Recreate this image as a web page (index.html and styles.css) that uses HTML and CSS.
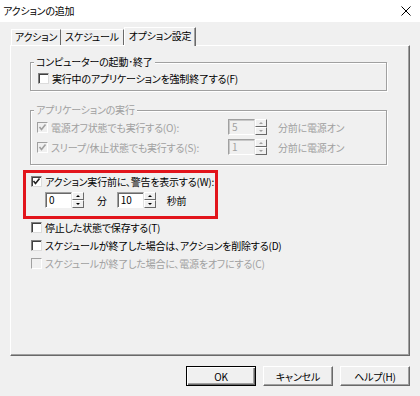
FILE: index.html
```html
<!DOCTYPE html>
<html lang="ja">
<head>
  <meta charset="UTF-8">
  <title>アクションの追加</title>
  <link rel="stylesheet" href="styles.css">
</head>
<body>
  <div class="titlebar">
    <span class="title">アクションの追加</span>
    <svg class="close" width="10" height="10" viewBox="0 0 10 10">
      <path d="M0.5 0.5 L9.5 9.5 M9.5 0.5 L0.5 9.5" stroke="#000" stroke-width="1" fill="none"/>
    </svg>
  </div>

  <div class="dialog">
    <div class="tabs">
      <div class="tab first">アクション</div>
      <div class="tab second">スケジュール</div>
      <div class="tab active">オプション設定</div>
    </div>

    <div class="panel">
      <!-- computer start / end -->
      <div class="group g1">
        <div class="group-title">コンピューターの起動･終了</div>
        <div class="check-row">
          <span class="box"></span>実行中のアプリケーションを強制終了する(F)
        </div>
      </div>

      <!-- application run (disabled) -->
      <div class="group g2 disabled">
        <div class="group-title">アプリケーションの実行</div>
        <div class="opt-row first-opt">
          <div class="check-row wide">
            <span class="box checked"><svg width="9" height="9" viewBox="0 0 9 9"><path d="M1.5 4 L3.5 6.5 L7.5 1.5" stroke="#a0a0a0" stroke-width="1.6" fill="none"/></svg></span>電源オフ状態でも実行する(O):
          </div>
          <div class="spin"><span class="edit">5</span><span class="arrows"><i class="up"></i><i class="down"></i></span></div>
          <span class="unit">分前に電源オン</span>
        </div>
        <div class="opt-row">
          <div class="check-row wide">
            <span class="box checked"><svg width="9" height="9" viewBox="0 0 9 9"><path d="M1.5 4 L3.5 6.5 L7.5 1.5" stroke="#a0a0a0" stroke-width="1.6" fill="none"/></svg></span>スリープ/休止状態でも実行する(S):
          </div>
          <div class="spin"><span class="edit">1</span><span class="arrows"><i class="up"></i><i class="down"></i></span></div>
          <span class="unit">分前に電源オン</span>
        </div>
      </div>

      <!-- warning before action -->
      <div class="highlight">
        <div class="check-row">
          <span class="box checked"><svg width="9" height="9" viewBox="0 0 9 9"><path d="M1.5 4 L3.5 6.5 L7.5 1.5" stroke="#222" stroke-width="1.6" fill="none"/></svg></span>アクション実行前に、警告を表示する(W):
        </div>
        <div class="spin-row">
          <div class="spin"><span class="edit">0</span><span class="arrows"><i class="up"></i><i class="down"></i></span></div>
          <span class="min">分</span>
          <div class="spin"><span class="edit">10</span><span class="arrows"><i class="up"></i><i class="down"></i></span></div>
          <span class="sec">秒前</span>
        </div>
      </div>

      <div class="rows">
        <div class="check-row"><span class="box"></span>停止した状態で保存する(T)</div>
        <div class="check-row"><span class="box"></span>スケジュールが終了した場合は、アクションを削除する(D)</div>
        <div class="check-row disabled"><span class="box"></span>スケジュールが終了した場合に、電源をオフにする(C)</div>
      </div>
    </div>

    <div class="buttons">
      <button class="btn default">OK</button>
      <button class="btn">キャンセル</button>
      <button class="btn">ヘルプ(H)</button>
    </div>
  </div>
</body>
</html>
```

FILE: styles.css
```css
/* Reset */
* {
  margin: 0;
  padding: 0;
  box-sizing: border-box;
}

body {
  width: 420px;
  height: 396px;
  overflow: hidden;
  background-color: #f0f0f0;
  font-family: "Noto Sans CJK JP", "Noto Sans", sans-serif;
  font-size: 10px;
  letter-spacing: -0.2px;
  font-feature-settings: "palt";
  color: #000;
}

/* Title bar */
.titlebar {
  height: 22px;
  background-color: #fff;
  display: flex;
  align-items: center;
  justify-content: space-between;
  padding: 0 9px 1px 3px;
}

.close {
  display: block;
}

.dialog {
  padding: 5px 10px 0 10px;
}

/* Tabs */
.tabs {
  display: flex;
  align-items: flex-end;
  height: 18px;
  padding-left: 1px;
}

.tab {
  height: 16px;
  line-height: 14px;
  text-align: center;
  border-top: 1px solid #fff;
  border-right: 1px solid #696969;
  white-space: nowrap;
}

.tab.first {
  width: 50px;
  border-left: 1px solid #fff;
}

.tab.second {
  width: 63px;
}

.tab.active {
  width: 72px;
  height: 19px;
  line-height: 16px;
  margin-bottom: -1px;
  z-index: 1;
  background-color: #f0f0f0;
  border-left: 1px solid #fff;
  box-shadow: inset -1px 0 0 #a0a0a0;
}

/* Tab panel */
.panel {
  height: 311px;
  border-top: 1px solid #fff;
  border-left: 1px solid #fff;
  border-right: 1px solid #696969;
  border-bottom: 1px solid #696969;
  box-shadow: inset -1px -1px 0 #a0a0a0;
}

.group {
  width: 357px;
  margin-left: 19px;
  border: 1px solid #a0a0a0;
  box-shadow: inset 1px 1px 0 #fff, 1px 1px 0 #fff;
}

.group-title {
  width: fit-content;
  margin: -8px 0 0 3px;
  padding: 0 2px;
  line-height: 14px;
  background-color: #f0f0f0;
}

.g1 {
  margin-top: 16px;
  padding-bottom: 4px;
}

.g1 .check-row {
  margin: 1px 0 0 7px;
  height: 16px;
}

.g2 {
  margin-top: 19px;
  padding-bottom: 9px;
}

.disabled,
.check-row.disabled {
  color: #a0a0a0;
}

.opt-row {
  display: flex;
  align-items: center;
  height: 16px;
  margin: 4px 0 0 6px;
}

.opt-row.first-opt {
  margin-top: 2px;
}

.check-row {
  display: flex;
  align-items: center;
  height: 14px;
  white-space: nowrap;
}

.check-row.wide {
  width: 191px;
  height: 16px;
}

.box {
  width: 11px;
  height: 11px;
  margin-right: 3px;
  flex-shrink: 0;
  display: flex;
  align-items: center;
  justify-content: center;
  background-color: #fff;
  border: 1px solid;
  border-color: #808080 #dcdcdc #dcdcdc #808080;
  box-shadow: inset 1px 1px 0 #404040;
}

.box svg {
  display: block;
}

.disabled .box {
  background-color: #f0f0f0;
  border-color: #a0a0a0 #fff #fff #a0a0a0;
  box-shadow: none;
}

/* Spin edit boxes */
.spin {
  display: flex;
  height: 16px;
}

.edit {
  width: 27px;
  height: 16px;
  line-height: 13px;
  padding-left: 3px;
  background-color: #fff;
  border: 1px solid;
  border-color: #a0a0a0 #e3e3e3 #fff #a0a0a0;
  box-shadow: inset 1px 1px 0 #696969;
}

.disabled .edit {
  background-color: #f0f0f0;
  box-shadow: inset 1px 1px 0 #c8c8c8;
}

.arrows {
  width: 12px;
  display: flex;
  flex-direction: column;
}

.arrows i {
  flex: 1;
  display: flex;
  align-items: center;
  justify-content: center;
  border: 1px solid;
  border-color: #fff #696969 #696969 #fff;
  background-color: #f0f0f0;
}

.arrows .up::after {
  content: "";
  border-left: 2px solid transparent;
  border-right: 2px solid transparent;
  border-bottom: 2px solid #000;
}

.arrows .down::after {
  content: "";
  border-left: 2px solid transparent;
  border-right: 2px solid transparent;
  border-top: 2px solid #000;
}

.disabled .arrows .up::after {
  border-bottom-color: #a0a0a0;
}

.disabled .arrows .down::after {
  border-top-color: #a0a0a0;
}

.unit {
  margin-left: 11px;
}

/* Red highlight around the warning option */
.highlight {
  width: 195px;
  margin: 5px 0 0 12px;
  padding: 1px 0 8px 5px;
  border: 3px solid #e2141b;
}

.spin-row {
  display: flex;
  align-items: center;
  height: 16px;
  margin: 4px 0 0 14px;
}

.min {
  margin: 0 10px 0 13px;
}

.sec {
  margin-left: 11px;
}

.rows {
  margin: 1px 0 0 20px;
}

.rows .check-row + .check-row {
  margin-top: 4px;
}

/* Buttons */
.buttons {
  display: flex;
  justify-content: flex-end;
  gap: 7px;
  margin-top: 10px;
}

.btn {
  width: 70px;
  height: 20px;
  font-family: inherit;
  font-size: 10px;
  letter-spacing: -0.2px;
  font-feature-settings: "palt";
  color: #000;
  background-color: #f0f0f0;
  border: 1px solid;
  border-color: #fff #696969 #696969 #fff;
  box-shadow: inset -1px -1px 0 #a0a0a0;
}

.btn.default {
  border-color: #000;
  box-shadow: inset 1px 1px 0 #fff, inset -1px -1px 0 #696969, inset -2px -2px 0 #a0a0a0;
}
```
